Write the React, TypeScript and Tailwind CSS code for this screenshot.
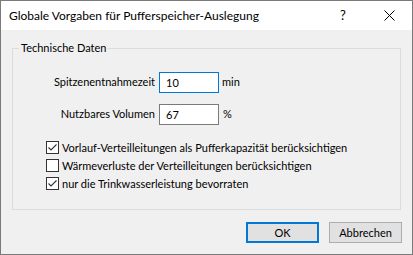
import React, { useState } from 'react';

const font = { fontFamily: 'Lato, "Noto Sans", Arial, sans-serif' };

function CheckBox({ checked, label, onToggle }: { checked: boolean; label: string; onToggle: () => void }) {
  return (
    <div className="flex items-start h-[18px] cursor-default" onClick={onToggle}>
      <span className="mt-[2px] w-[13px] h-[13px] border border-[#333333] bg-white flex items-center justify-center shrink-0">
        {checked && (
          <svg width="11" height="11" viewBox="0 0 11 11">
            <polyline points="1.5,5.5 4,8 9.5,2.5" fill="none" stroke="#333333" strokeWidth="1.1" />
          </svg>
        )}
      </span>
      <span className="ml-[3px] leading-[18px]">{label}</span>
    </div>
  );
}

export default function App() {
  const [zeit, setZeit] = useState('10');
  const [volumen, setVolumen] = useState('67');
  const [opts, setOpts] = useState([true, false, true]);

  const toggle = (i: number) => setOpts(o => o.map((v, j) => (j === i ? !v : v)));

  return (
    <div className="w-[413px] h-[255px] border border-[#7a7a7a] bg-[#f0f0f0] flex flex-col text-[11px] text-black" style={font}>
      {/* Title bar */}
      <div className="h-[29px] bg-white flex items-center shrink-0 text-[12px]">
        <span className="pl-[8px] flex-1">Globale Vorgaben für Pufferspeicher-Auslegung</span>
        <span className="w-[46px] text-center text-[13px]">?</span>
        <span className="w-[46px] h-[29px] flex items-center justify-center">
          <svg width="11" height="11" viewBox="0 0 11 11">
            <path d="M0.5 0.5 L10.5 10.5 M10.5 0.5 L0.5 10.5" stroke="#000" strokeWidth="1" />
          </svg>
        </span>
      </div>

      {/* Body */}
      <div className="flex-1 flex flex-col">
        <fieldset className="mt-[10px] mx-[11px] h-[170px] border border-[#dcdcdc]">
          <legend className="ml-[6px] px-[2px] leading-[16px]">Technische Daten</legend>

          <div className="mt-[16px] flex items-center h-[21px]">
            <span className="w-[142px] text-right">Spitzenentnahmezeit</span>
            <input
              value={zeit}
              onChange={e => setZeit(e.target.value)}
              className="ml-[4px] w-[60px] h-[21px] border border-[#0078d7] bg-white px-[6px] outline-none"
            />
            <span className="ml-[3px]">min</span>
          </div>

          <div className="mt-[11px] flex items-center h-[21px]">
            <span className="w-[142px] text-right">Nutzbares Volumen</span>
            <input
              value={volumen}
              onChange={e => setVolumen(e.target.value)}
              className="ml-[4px] w-[60px] h-[21px] border border-[#7a7a7a] bg-white px-[6px] outline-none"
            />
            <span className="ml-[4px]">%</span>
          </div>

          <div className="mt-[14px] pl-[33px] flex flex-col">
            <CheckBox checked={opts[0]} onToggle={() => toggle(0)} label="Vorlauf-Verteilleitungen als Pufferkapazität berücksichtigen" />
            <CheckBox checked={opts[1]} onToggle={() => toggle(1)} label="Wärmeverluste der Verteilleitungen berücksichtigen" />
            <CheckBox checked={opts[2]} onToggle={() => toggle(2)} label="nur die Trinkwasserleistung bevorraten" />
          </div>
        </fieldset>

        <div className="mt-[12px] mr-[10px] flex justify-end gap-[10px]">
          <button className="w-[73px] h-[21px] bg-[#e1e1e1] border-2 border-[#0078d7] leading-none">OK</button>
          <button className="w-[73px] h-[21px] bg-[#e1e1e1] border border-[#adadad] leading-none">Abbrechen</button>
        </div>
      </div>
    </div>
  );
}
